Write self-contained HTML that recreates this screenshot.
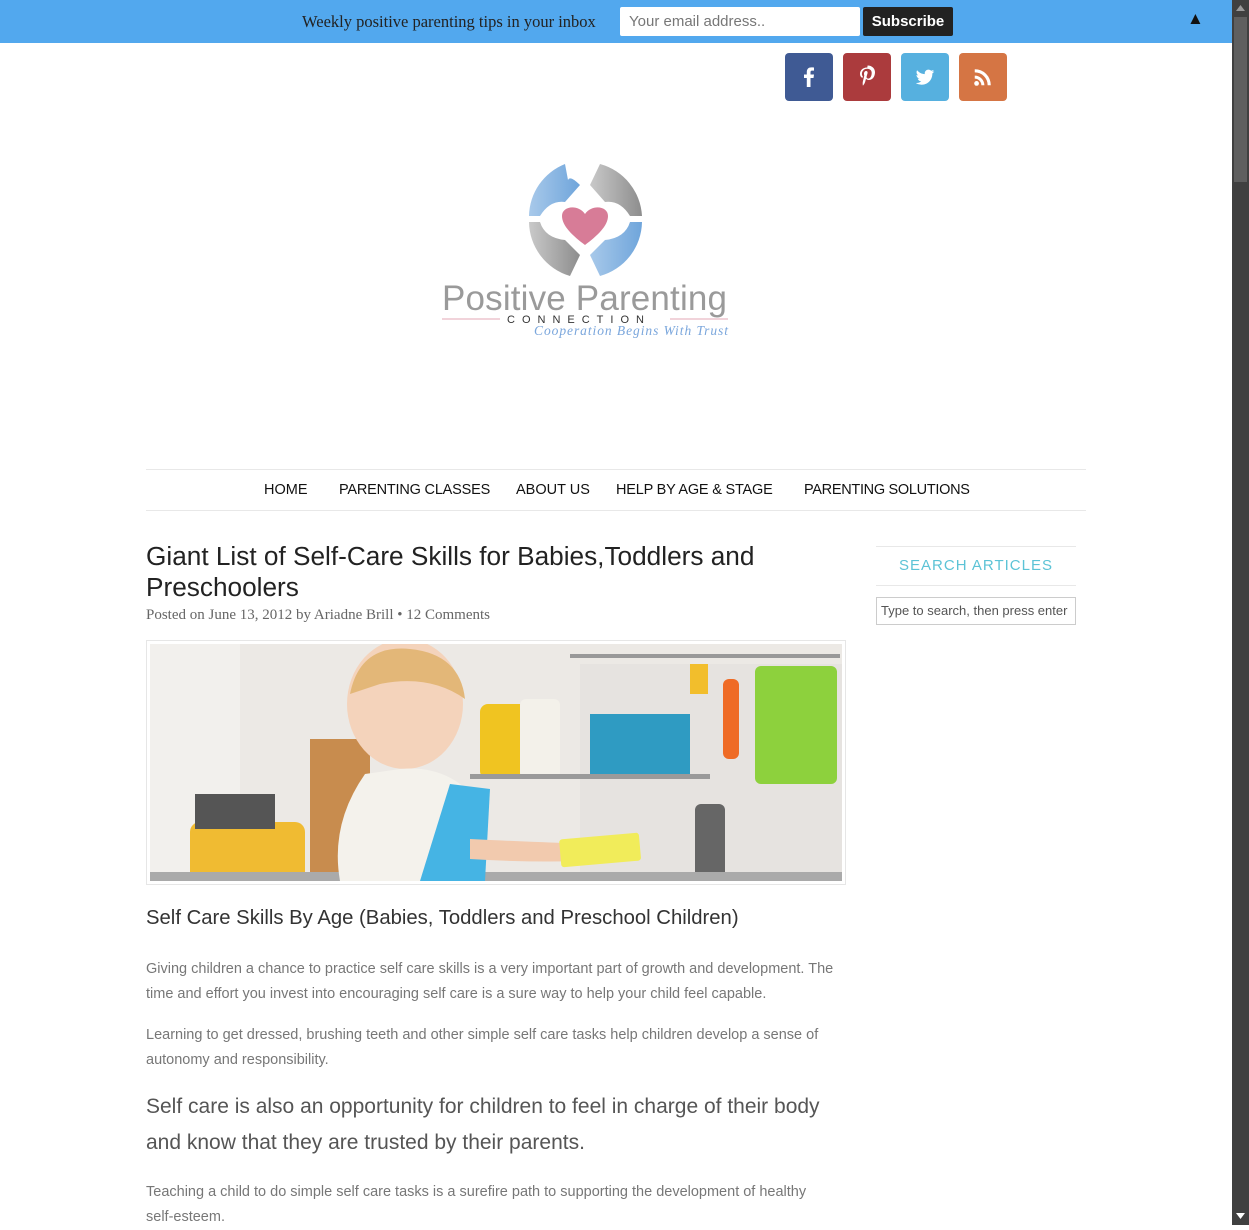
<!DOCTYPE html>
<html><head><meta charset="utf-8">
<style>
*{box-sizing:border-box;margin:0;padding:0}
html,body{width:1249px;height:1225px;overflow:hidden;background:#fff;font-family:"Liberation Sans",sans-serif}
.bar{position:absolute;left:0;top:0;width:1232px;height:43px;background:#52a8ee}
.bar .t{position:absolute;left:302px;top:12px;font-family:"Liberation Serif",serif;font-size:16.5px;color:#222}
.bar .in{position:absolute;left:620px;top:7px;width:240px;height:29px;background:#fff;border-radius:2px;font-size:15px;color:#777;padding:6px 9px}
.bar .btn{position:absolute;left:863px;top:7px;width:90px;height:29px;background:#222;border-radius:2px;color:#fff;font-weight:bold;font-size:15px;text-align:center;line-height:29px}
.bar .up{position:absolute;left:1187px;top:9px;font-size:17px;color:#111}
.sb{position:absolute;left:1232px;top:0;width:17px;height:1225px;background:#404040}
.sb .th{position:absolute;left:2px;top:17px;width:13px;height:165px;background:#5f5f5f}
.soc{position:absolute;top:53px;width:48px;height:48px;border-radius:4px;color:#fff;display:flex;align-items:center;justify-content:center}
.nav{position:absolute;left:146px;top:469px;width:940px;height:42px;border-top:1px solid #e8e8e8;border-bottom:1px solid #e8e8e8;font-size:14.5px;color:#111}
.nav span{position:absolute;top:12px;white-space:nowrap}
h1{position:absolute;left:146px;top:541px;font-weight:normal;font-size:26.2px;line-height:31px;color:#222;width:660px}
.meta{position:absolute;left:146px;top:607px;font-family:"Liberation Serif",serif;font-size:15px;color:#666}
.img{position:absolute;left:146px;top:640px;width:700px;height:245px;border:1px solid #e6e6e6;padding:3px}
h2{position:absolute;left:146px;top:907px;font-weight:normal;font-size:20.3px;color:#333}
.p{position:absolute;left:146px;font-size:14.5px;color:#777;line-height:25px;width:720px;white-space:nowrap}
.big{position:absolute;left:146px;top:1089px;font-size:21px;line-height:36px;color:#555;width:720px;white-space:nowrap}
.side1{position:absolute;left:876px;top:546px;width:200px;height:40px;border-top:1px solid #e8e8e8;border-bottom:1px solid #e8e8e8;text-align:center;color:#5cc3d6;font-size:15px;letter-spacing:1px;line-height:38px}
.side2{position:absolute;left:876px;top:597px;width:200px;height:28px;border:1px solid #ccc;font-size:13px;color:#555;padding:5px 4px;white-space:nowrap;overflow:hidden}
</style></head><body>
<div class="bar"><div class="t">Weekly positive parenting tips in your inbox</div><div class="in">Your email address..</div><div class="btn">Subscribe</div><div class="up">▲</div></div>
<div class="sb"><div class="th"></div>
<svg style="position:absolute;left:4px;top:5px" width="9" height="6"><path d="M0 6 L4.5 0 L9 6Z" fill="#9a9a9a"/></svg>
<svg style="position:absolute;left:4px;top:1213px" width="9" height="6"><path d="M0 0 L4.5 6 L9 0Z" fill="#fff"/></svg></div>

<div class="soc" style="left:785px;background:#3f5a94"><svg width="24" height="24" viewBox="0 0 24 24"><path d="M13.5 22v-9h3l.5-3.5h-3.5V7.3c0-1 .3-1.7 1.8-1.7H17V2.5c-.4 0-1.5-.1-2.7-.1-2.7 0-4.5 1.6-4.5 4.6v2.5H7V13h2.8v9z" fill="#fff"/></svg></div>
<div class="soc" style="left:843px;background:#ab3b3d"><svg width="24" height="24" viewBox="0 0 24 24"><path d="M12.3 2.5C7 2.5 5 6 5 8.9c0 1.8.7 3.3 2.1 3.9.2.1.4 0 .5-.3l.2-.8c.1-.3 0-.4-.2-.6-.4-.5-.7-1.2-.7-2.1 0-2.7 2-5.2 5.3-5.2 2.9 0 4.5 1.8 4.5 4.1 0 3.1-1.4 5.7-3.4 5.7-1.1 0-2-.9-1.7-2.100.3-1.4 1-2.9 1-3.900 0-.9-.5-1.6-1.5-1.6-1.2 0-2.1 1.2-2.1 2.8 0 1 .3 1.7.3 1.7l-1.4 5.9c-.4 1.8-.1 3.9 0 4.1h.2c.1-.2 1.6-2 2.1-3.8l.8-3.1c.4.8 1.6 1.4 2.8 1.4 3.7 0 6.2-3.4 6.2-7.9 0-3.4-2.9-6.6-7.4-6.6z" fill="#fff"/></svg></div>
<div class="soc" style="left:901px;background:#56b0df"><svg width="22" height="22" viewBox="0 0 24 24"><path d="M22 5.9c-.7.3-1.5.5-2.4.6.9-.5 1.5-1.3 1.8-2.3-.8.5-1.700.8-2.6 1-.8-.8-1.8-1.3-3-1.3-2.3 0-4.1 1.8-4.1 4.1 0 .3 0 .6.1.9C8.4 8.8 5.4 7.2 3.4 4.7c-.4.6-.6 1.3-.6 2.1 0 1.4.7 2.7 1.8 3.4-.7 0-1.3-.2-1.9-.5 0 2 1.4 3.7 3.3 4.1-.6.2-1.3.2-1.9.1.5 1.6 2 2.8 3.8 2.9-1.4 1.1-3.2 1.8-5.1 1.8H2c1.8 1.2 4 1.8 6.3 1.8 7.5 0 11.7-6.2 11.7-11.7v-.5c.8-.6 1.5-1.3 2-2.2z" fill="#fff"/></svg></div>
<div class="soc" style="left:959px;background:#d57544"><svg width="22" height="22" viewBox="0 0 24 24"><circle cx="5" cy="19" r="2.6" fill="#fff"/><path d="M3 10.5a10.5 10.5 0 0 1 10.5 10.5h-3.3A7.2 7.2 0 0 0 3 13.8zM3 3.5A17.5 17.5 0 0 1 20.5 21h-3.4A14.1 14.1 0 0 0 3 6.9z" fill="#fff"/></svg></div>

<svg style="position:absolute;left:440px;top:160px" width="300" height="185" viewBox="0 0 300 185">
<defs><linearGradient id="bl" x1="0" x2="1"><stop offset="0" stop-color="#a8c9ea"/><stop offset="1" stop-color="#6fa5db"/></linearGradient><linearGradient id="gr" x1="0" x2="1"><stop offset="0" stop-color="#c9c9c9"/><stop offset="1" stop-color="#8d8d8d"/></linearGradient></defs>
<path d="M125 4 A57 57 0 0 0 89 56 L100 56 Q110 40 125 42 L140 25 Q130 15 128 20 Z" fill="url(#bl)"/>
<path d="M160 4 A57 57 0 0 1 202 56 L190 56 Q180 40 165 42 L150 25 Z" fill="url(#gr)"/>
<path d="M89 62 A57 57 0 0 0 130 116 L140 95 L125 80 Q105 78 100 62 Z" fill="url(#gr)"/>
<path d="M202 62 A57 57 0 0 1 160 116 L150 95 L165 80 Q185 78 190 62 Z" fill="url(#bl)"/>
<path d="M145 85 C133 76 122 66 122 56 C122 46 138 44 145 54 C152 44 168 46 168 56 C168 66 157 76 145 85Z" fill="#d77c97"/>
<text x="2" y="150" font-family="Liberation Sans,sans-serif" font-size="35" fill="#9a9a9a" textLength="285">Positive Parenting</text>
<line x1="2" y1="159" x2="60" y2="159" stroke="#e3a7b5"/><line x1="230" y1="159" x2="288" y2="159" stroke="#e3a7b5"/>
<text x="67" y="163" font-family="Liberation Sans,sans-serif" font-size="11" letter-spacing="7" fill="#333">CONNECTION</text>
<text x="94" y="175" font-family="Liberation Serif,serif" font-style="italic" font-size="13.5" fill="#7aa6dc" textLength="194">Cooperation Begins With Trust</text>
</svg>

<div class="nav"><span style="left:118px">HOME</span><span style="left:193px;letter-spacing:-0.2px">PARENTING CLASSES</span><span style="left:370px">ABOUT US</span><span style="left:470px;letter-spacing:-0.2px">HELP BY AGE &amp; STAGE</span><span style="left:658px;letter-spacing:-0.3px">PARENTING SOLUTIONS</span></div>

<h1>Giant List of Self-Care Skills for Babies,Toddlers and Preschoolers</h1>
<div class="meta">Posted on June 13, 2012 by Ariadne Brill • 12 Comments</div>

<div class="img"><svg width="692" height="237" viewBox="0 0 692 237">
<rect width="692" height="237" fill="#ece9e5"/>
<rect x="0" y="0" width="90" height="237" fill="#f2f0ed"/>
<rect x="430" y="20" width="262" height="217" fill="#e6e3e0"/>
<rect x="420" y="10" width="270" height="4" fill="#999"/>
<rect x="330" y="60" width="55" height="75" rx="8" fill="#f0c421"/>
<rect x="370" y="55" width="40" height="80" rx="6" fill="#f3f1ea"/>
<rect x="440" y="70" width="100" height="60" fill="#2f9bc2"/>
<rect x="540" y="20" width="18" height="30" fill="#f2be2c"/>
<rect x="573" y="35" width="16" height="80" rx="6" fill="#ef6b25"/>
<rect x="605" y="22" width="82" height="118" rx="6" fill="#8dd13d"/>
<rect x="320" y="130" width="240" height="5" fill="#9a9a9a"/>
<rect x="160" y="95" width="60" height="140" fill="#c88c4e"/>
<rect x="40" y="178" width="115" height="60" rx="10" fill="#f0bb32"/>
<rect x="45" y="150" width="80" height="35" fill="#555"/>
<rect x="545" y="160" width="30" height="77" rx="6" fill="#666"/>
<rect x="0" y="228" width="692" height="9" fill="#aaa"/>
<ellipse cx="255" cy="60" rx="58" ry="65" fill="#f4d3bb"/>
<path d="M200 50 Q210 0 260 5 Q310 10 315 55 Q280 30 230 40 Z" fill="#e3b778"/>
<path d="M215 130 Q180 180 190 237 L320 237 Q330 200 330 160 Q300 120 250 125Z" fill="#f4f2ec"/>
<path d="M300 140 L340 145 L335 237 L270 237 Z" fill="#45b4e4"/>
<path d="M320 195 Q420 200 470 200 L470 215 Q400 220 320 215Z" fill="#f2caae"/>
<rect x="410" y="192" width="80" height="28" rx="3" fill="#f1ec5a" transform="rotate(-5 450 205)"/>
</svg></div>

<h2>Self Care Skills By Age (Babies, Toddlers and Preschool Children)</h2>
<div class="p" style="top:957px">Giving children a chance to practice self care skills is a very important part of growth and development. The<br>time and effort you invest into encouraging self care is a sure way to help your child feel capable.</div>
<div class="p" style="top:1023px">Learning to get dressed, brushing teeth and other simple self care tasks help children develop a sense of<br>autonomy and responsibility.</div>
<div class="big">Self care is also an opportunity for children to feel in charge of their body<br>and know that they are trusted by their parents.</div>
<div class="p" style="top:1180px">Teaching a child to do simple self care tasks is a surefire path to supporting the development of healthy<br>self-esteem.</div>

<div class="side1">SEARCH ARTICLES</div>
<div class="side2">Type to search, then press enter</div>
</body></html>
